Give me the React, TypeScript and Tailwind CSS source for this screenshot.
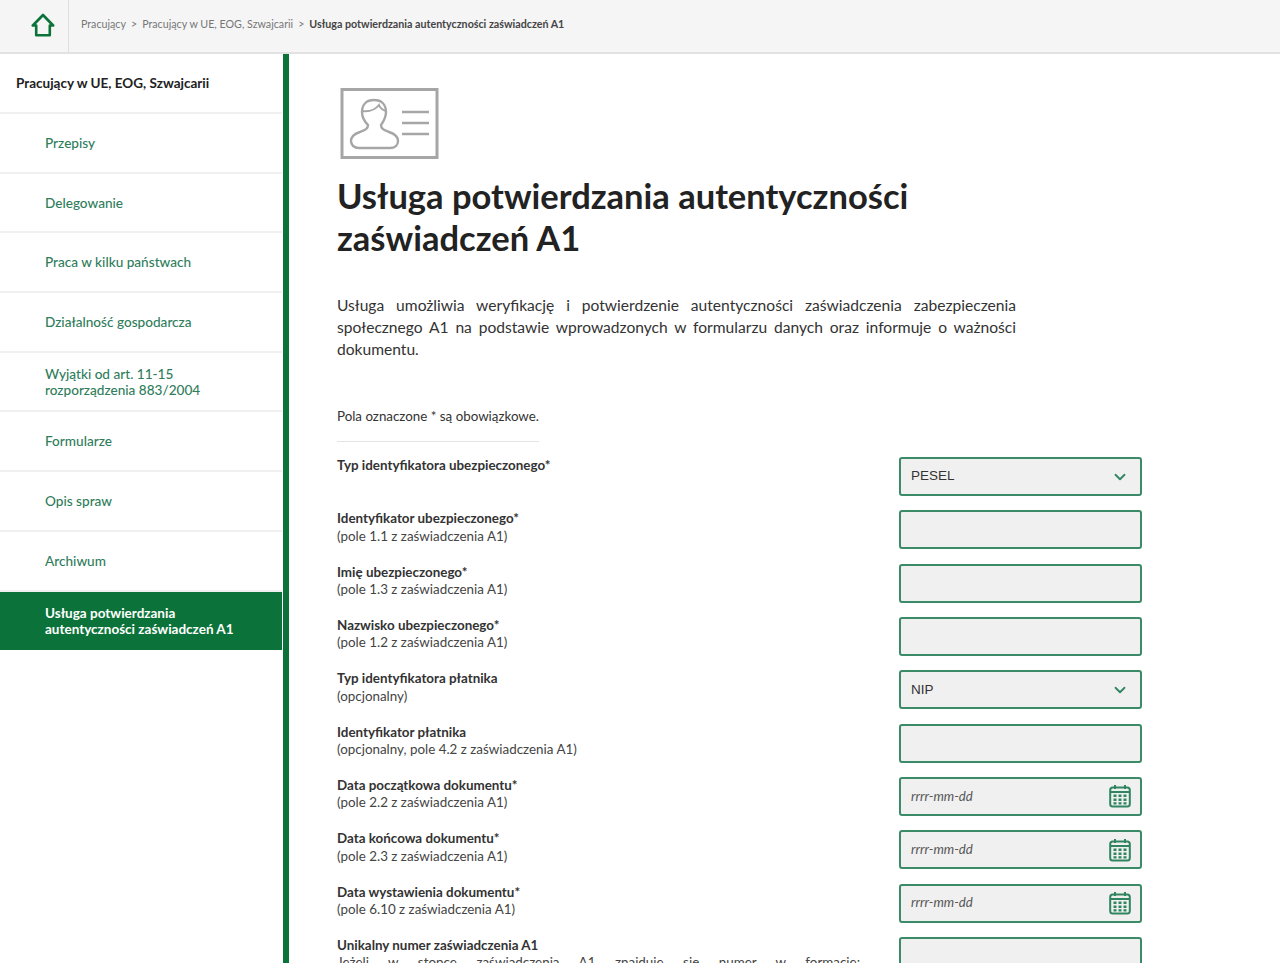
import { ChevronDown } from "lucide-react";

const NAV = [
  "Przepisy",
  "Delegowanie",
  "Praca w kilku państwach",
  "Działalność gospodarcza",
  "Wyjątki od art. 11-15\nrozporządzenia 883/2004",
  "Formularze",
  "Opis spraw",
  "Archiwum",
];

type Field = {
  label: string;
  hint: string;
  kind: "select" | "text" | "date";
  value?: string;
};

const FIELDS: Field[] = [
  { label: "Typ identyfikatora ubezpieczonego*", hint: "", kind: "select", value: "PESEL" },
  { label: "Identyfikator ubezpieczonego*", hint: "(pole 1.1 z zaświadczenia A1)", kind: "text" },
  { label: "Imię ubezpieczonego*", hint: "(pole 1.3 z zaświadczenia A1)", kind: "text" },
  { label: "Nazwisko ubezpieczonego*", hint: "(pole 1.2 z zaświadczenia A1)", kind: "text" },
  { label: "Typ identyfikatora płatnika", hint: "(opcjonalny)", kind: "select", value: "NIP" },
  { label: "Identyfikator płatnika", hint: "(opcjonalny, pole 4.2 z zaświadczenia A1)", kind: "text" },
  { label: "Data początkowa dokumentu*", hint: "(pole 2.2 z zaświadczenia A1)", kind: "date" },
  { label: "Data końcowa dokumentu*", hint: "(pole 2.3 z zaświadczenia A1)", kind: "date" },
  { label: "Data wystawienia dokumentu*", hint: "(pole 6.10 z zaświadczenia A1)", kind: "date" },
];

function HomeIcon() {
  return (
    <svg width="24" height="24" viewBox="0 0 24 24" fill="none" stroke="#0b7339" strokeWidth="2.6" strokeLinejoin="round" strokeLinecap="round">
      <path d="M12 2 1.8 12.5h3.4v9.7h13.6v-9.7h3.4Z" />
    </svg>
  );
}

function CardIcon() {
  return (
    <svg width="99" height="71" viewBox="0 0 99 71" fill="none" stroke="#a6a6a6">
      <rect x="2" y="1.5" width="95" height="68" strokeWidth="3" />
      <path
        strokeWidth="2.4"
        d="M22 24c0-8 5-12 12-12s12 4 12 12c0 6-3 10-5 13 0 4 3 5 8 7 6 2 9 5 9 9 0 4-3 7-8 7H19c-5 0-8-3-8-7s3-7 9-9c5-2 8-3 8-7-3-3-6-7-6-13Z"
      />
      <path strokeWidth="2" d="M22 23c7 1 13-1 17-6 1 3 4 5 7 6" />
      <path strokeWidth="2.6" d="M62 24h27M62 35h27M62 46h27" />
    </svg>
  );
}

function CalendarIcon() {
  return (
    <svg width="22" height="24" viewBox="0 0 22 24" fill="none" stroke="#2f8560">
      <rect x="1.2" y="3.5" width="19.6" height="19" rx="2.5" strokeWidth="2" />
      <path strokeWidth="2" d="M1.5 8h19M6 1v4M16 1v4" />
      <g fill="#2f8560" stroke="none">
        <rect x="4.5" y="10.5" width="3" height="2.5" />
        <rect x="9.5" y="10.5" width="3" height="2.5" />
        <rect x="14.5" y="10.5" width="3" height="2.5" />
        <rect x="4.5" y="14.5" width="3" height="2.5" />
        <rect x="9.5" y="14.5" width="3" height="2.5" />
        <rect x="14.5" y="14.5" width="3" height="2.5" />
        <rect x="4.5" y="18.2" width="3" height="2.3" />
        <rect x="9.5" y="18.2" width="3" height="2.3" />
        <rect x="14.5" y="18.2" width="3" height="2.3" />
      </g>
    </svg>
  );
}

function Control({ field }: { field: Field }) {
  return (
    <div className="w-[243px] h-[39px] shrink-0 flex items-center justify-between pl-[10px] bg-[#f0f0f0] border-2 border-[#3b8a68] rounded-[3px]">
      {field.kind === "select" && (
        <>
          <span className="font-['Liberation_Sans',sans-serif] text-[13.5px] text-[#333333]">{field.value}</span>
          <ChevronDown size={18} strokeWidth={2.4} className="mr-[11px] text-[#2f8560]" />
        </>
      )}
      {field.kind === "date" && (
        <>
          <span className="text-[13.2px] italic text-[#555555]">rrrr-mm-dd</span>
          <span className="mr-[9px] flex">
            <CalendarIcon />
          </span>
        </>
      )}
    </div>
  );
}

export default function App() {
  return (
    <div className="h-[963px] overflow-hidden bg-white font-['Lato','Open_Sans',sans-serif] text-[#222222]">
      {/* Breadcrumbs */}
      <header className="h-[54px] flex items-stretch bg-[#f5f5f5] border-b-2 border-[#e2e2e2]">
        <div className="w-[69px] flex items-center justify-start pl-[31px] border-r border-[#dedede] pb-[3px]">
          <HomeIcon />
        </div>
        <nav className="flex items-center gap-[5px] pl-3 pb-[4px] text-[10.7px] text-[#777777]">
          <span>Pracujący</span>
          <span>&gt;</span>
          <span>Pracujący w UE, EOG, Szwajcarii</span>
          <span>&gt;</span>
          <span className="font-bold text-[#444444]">Usługa potwierdzania autentyczności zaświadczeń A1</span>
        </nav>
      </header>

      <div className="flex">
        {/* Sidebar */}
        <aside className="w-[283px] shrink-0 pr-px">
          <div className="h-[60px] flex items-center pl-4 border-b-2 border-[#f0f0f0] text-[13.5px] font-bold text-[#222222]">
            Pracujący w UE, EOG, Szwajcarii
          </div>
          {NAV.map((item) => (
            <div
              key={item}
              className="h-[59.7px] flex items-center pl-[45px] border-b-2 border-[#f0f0f0] text-[13.6px] leading-[16px] font-medium text-[#2f7d5b] whitespace-pre-line"
            >
              {item}
            </div>
          ))}
          <div className="h-[58.6px] flex items-center pl-[45px] bg-[#0b7339] text-[13.5px] leading-[16px] font-bold text-white">
            <span>
              Usługa potwierdzania
              <br />
              autentyczności zaświadczeń A1
            </span>
          </div>
        </aside>
        <div className="w-[6px] shrink-0 h-[909px] bg-[#0b7339]" />

        {/* Main content */}
        <main className="flex-1 pl-[48px] pt-[34px]">
          <div className="pl-[3px] h-[71px]">
            <CardIcon />
          </div>
          <h1 className="mt-[16px] text-[34.5px] leading-[42px] font-bold text-[#222222] w-[640px]">
            Usługa potwierdzania autentyczności zaświadczeń A1
          </h1>
          <p className="mt-[35px] w-[679px] text-[15.6px] leading-[22px] text-justify text-[#333333]">
            Usługa umożliwia weryfikację i potwierdzenie autentyczności zaświadczenia zabezpieczenia społecznego A1 na
            podstawie wprowadzonych w formularzu danych oraz informuje o ważności dokumentu.
          </p>
          <p className="mt-[46px] text-[13.35px] leading-[20px] text-[#333333]">Pola oznaczone * są obowiązkowe.</p>
          <div className="mt-[15px] w-[202px] h-px bg-[#e4e4e4]" />

          <form className="mt-[15px] w-[805px]">
            {FIELDS.map((f) => (
              <div key={f.label} className="h-[53.33px] flex justify-between items-start">
                <div className="text-[13.4px] leading-[17.5px]">
                  <div className="font-bold text-[#333333]">{f.label}</div>
                  <div className="text-[#444444]">{f.hint}</div>
                </div>
                <Control field={f} />
              </div>
            ))}
            <div className="flex justify-between items-start">
              <div className="w-[523px] text-[13.4px] leading-[17.5px]">
                <div className="font-bold text-[#333333]">Unikalny numer zaświadczenia A1</div>
                <div className="text-[#444444] text-justify [text-align-last:justify]">
                  Jeżeli w stopce zaświadczenia A1 znajduje się numer w formacie:
                </div>
              </div>
              <Control field={{ label: "", hint: "", kind: "text" }} />
            </div>
          </form>
        </main>
      </div>
    </div>
  );
}
